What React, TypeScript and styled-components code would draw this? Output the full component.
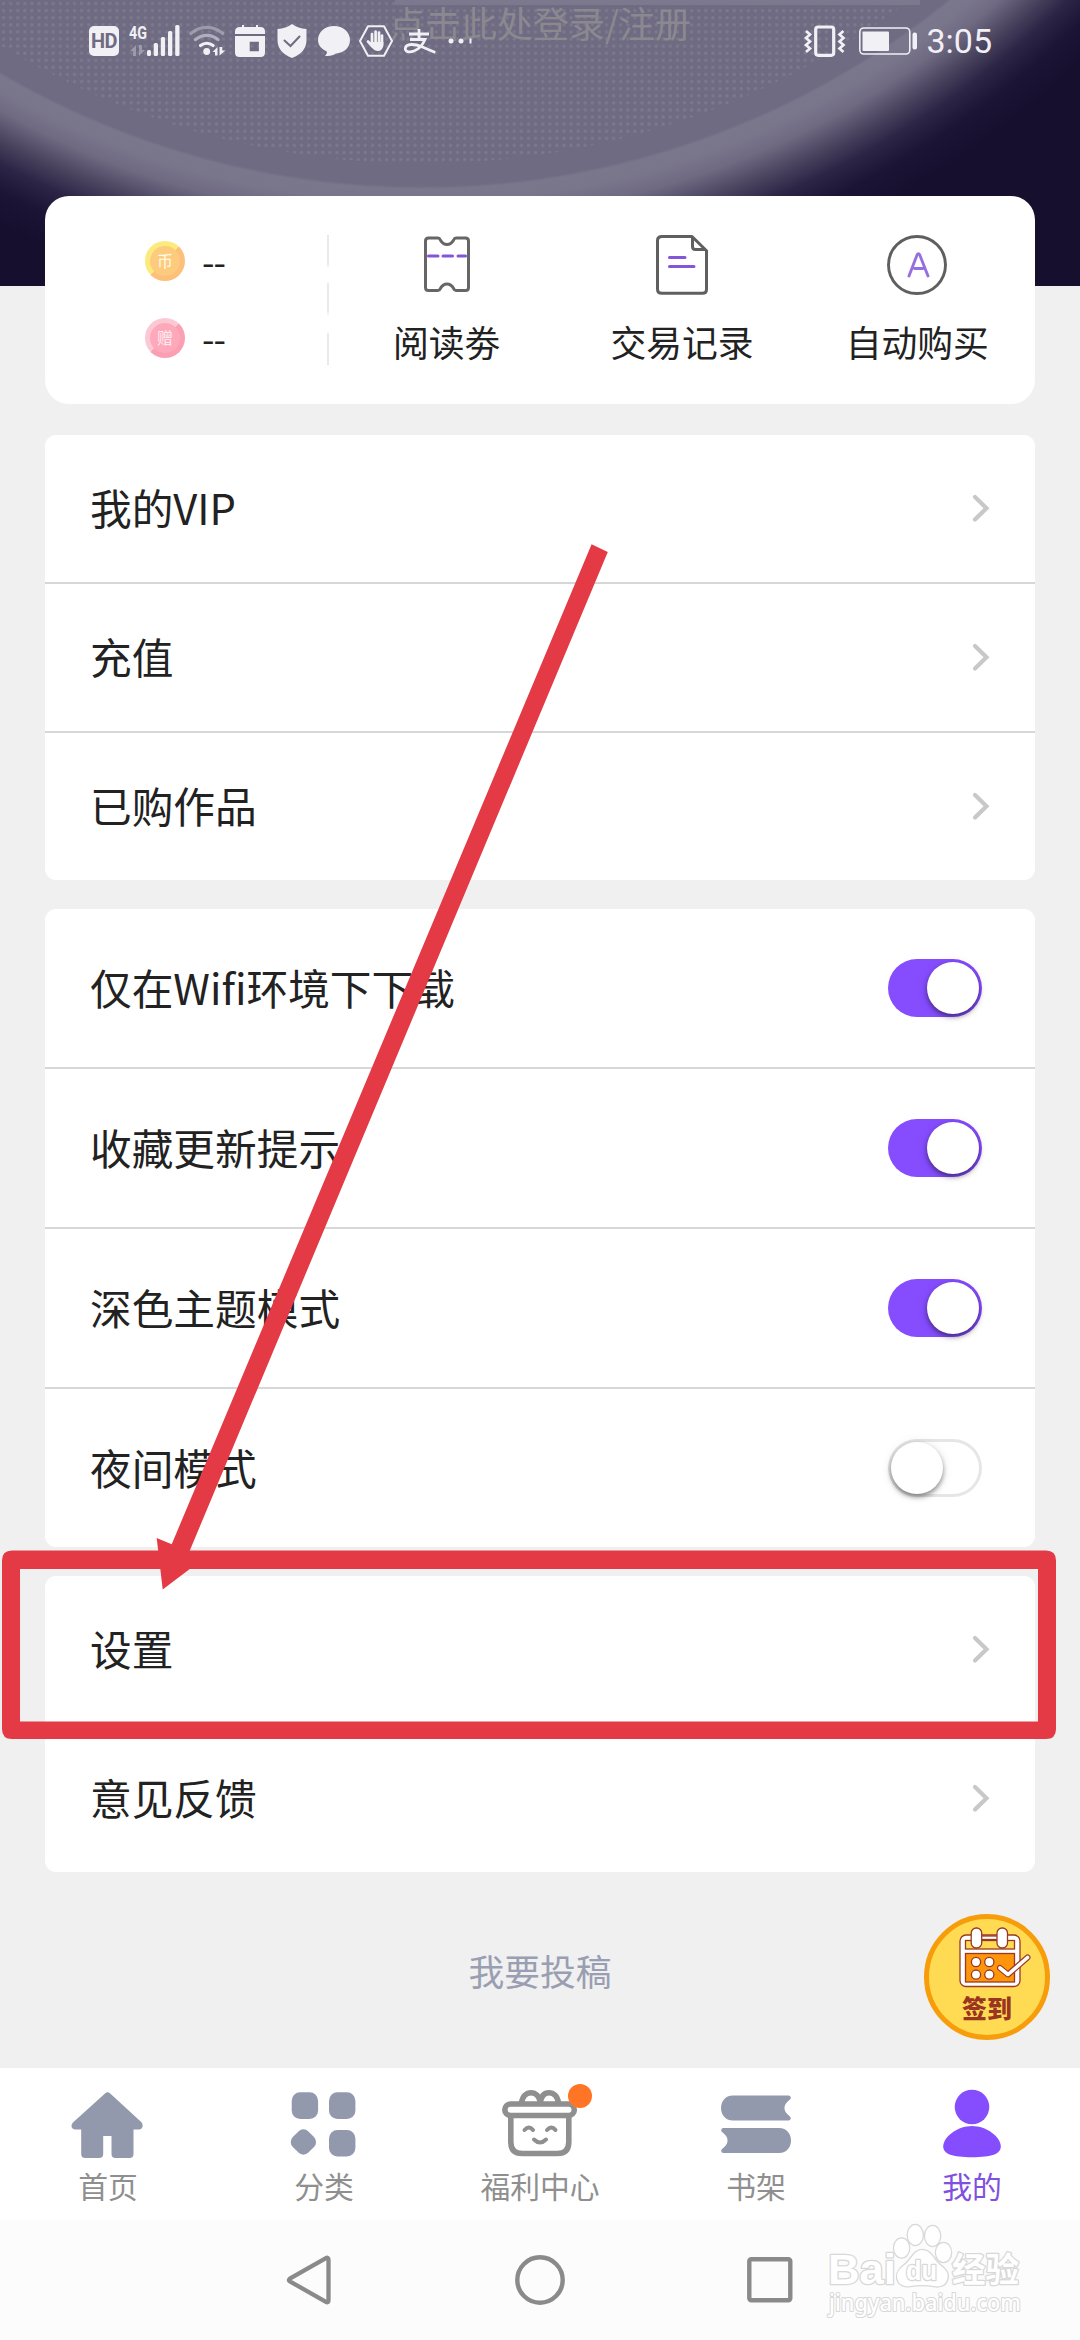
import React from "react";
import styled, { createGlobalStyle, css } from "styled-components";

const purple = "#864dff";
const slate = "#9299ad";
const annotationRed = "#e33a45";

const GlobalStyle = createGlobalStyle`
  * { box-sizing: border-box; }
  body {
    margin: 0;
    background: #f0f0f0;
    font-family: "Noto Sans CJK SC", "Noto Sans", sans-serif;
    color: #222;
  }
  svg { display: block; flex: none; overflow: visible; }
`;

const Screen = styled.div`
  position: relative;
  width: 1080px;
  height: 2340px;
  overflow: hidden;
  display: flex;
  flex-direction: column;
`;

/* ---------- header ---------- */

const Hero = styled.header`
  position: relative;
  flex: none;
  height: 286px;
  background: radial-gradient(
    circle at 422px -648px,
    #6f6b82 834px,
    #7a768c 837px,
    #79758b 850px,
    #6f6a82 868px,
    #4e4863 890px,
    #2d2545 915px,
    #1c1435 940px,
    #170f2e 970px
  );
  &::before {
    content: "";
    position: absolute;
    inset: 0;
    background: radial-gradient(circle, #7d798f 1px, transparent 2.3px) 0 0 / 7.1px 7.1px;
    mask-image: radial-gradient(circle at 422px -648px, #000 811px, transparent 812px);
  }
  &::after {
    content: "";
    position: absolute;
    top: 0;
    left: 395px;
    width: 525px;
    height: 5px;
    background: #7c788e;
  }
`;

const LoginHint = styled.div`
  position: absolute;
  z-index: 1;
  top: 1px;
  left: 0;
  right: 0;
  text-align: center;
  font-size: 36px;
  line-height: 42px;
  color: #8b898f;
`;

const StatusBar = styled.div`
  position: relative;
  z-index: 2;
  display: flex;
  justify-content: space-between;
  align-items: center;
  height: 82px;
  padding: 0 88px 0 89px;
  color: #f1f0f5;
`;

const StatusGroup = styled.div<{ $gap: number }>`
  display: flex;
  align-items: center;
  gap: ${(p) => p.$gap}px;
`;

const HdBadge = styled.span`
  width: 30px;
  height: 30px;
  border-radius: 5px;
  background: #f1f0f5;
  color: #6f6b82;
  font: 700 20px/31px Roboto, sans-serif;
  letter-spacing: -0.5px;
  text-align: center;
`;

const Clock = styled.span`
  font: 400 34px/40px Roboto, sans-serif;
`;

/* ---------- wallet card ---------- */

const Main = styled.main`
  position: relative;
  flex: 1;
  display: flex;
  flex-direction: column;
  padding: 0 45px;
  margin-top: -90px;
`;

const WalletCard = styled.section`
  display: flex;
  height: 208px;
  margin-bottom: 31px;
  border-radius: 24px;
  background: #fff;
`;

const Balances = styled.div`
  display: flex;
  flex-direction: column;
  gap: 37px;
  width: 282px;
  padding: 45px 0 0 100px;
`;

const Balance = styled.div`
  display: flex;
  align-items: center;
  gap: 17px;
  height: 40px;
`;

const Coin = styled.span<{ $gift?: boolean }>`
  display: flex;
  align-items: center;
  justify-content: center;
  width: 40px;
  height: 40px;
  border-radius: 50%;
  background: ${(p) =>
    p.$gift
      ? "linear-gradient(135deg, #fbc8d4 50%, #fb9fb2 50%)"
      : "linear-gradient(135deg, #fdea7c 50%, #fcc07a 50%)"};
`;

const CoinFace = styled.span<{ $gift?: boolean }>`
  width: 30px;
  height: 30px;
  border-radius: 50%;
  background: ${(p) => (p.$gift ? "#fda9bb" : "#fdcb7d")};
  color: ${(p) => (p.$gift ? "#ffe9ee" : "#fffbe6")};
  font-size: 16px;
  line-height: 29px;
  text-align: center;
`;

const Amount = styled.span`
  font-size: 36px;
  line-height: 40px;
  letter-spacing: -1px;
  padding-bottom: 2px;
`;

const Divider = styled.div`
  width: 2px;
  height: 130px;
  margin-top: 39px;
  background: linear-gradient(
    #e9e9e9 0 22%, #fff 26%, #fff 36%, #e9e9e9 38% 58%, #fff 63%, #fff 74%, #e9e9e9 77%
  );
`;

const WalletLink = styled.div`
  flex: 1;
  display: flex;
  flex-direction: column;
  align-items: center;
  padding-top: 39px;
  font-size: 35.8px;
  line-height: 52px;
`;

const WalletIcon = styled.div`
  height: 60px;
  margin-bottom: 20px;
`;

/* ---------- menu cards ---------- */

const Card = styled.section`
  flex: none;
  margin-bottom: 29px;
  border-radius: 11px;
  background: #fff;
  overflow: hidden;
`;

const Row = styled.div<{ $tall?: boolean; $plain?: boolean }>`
  display: flex;
  align-items: center;
  justify-content: space-between;
  height: ${(p) => (p.$tall ? 160 : 149)}px;
  padding: 0 ${(p) => (p.$tall ? 53 : 46)}px 0 45px;
  border-bottom: 2px solid ${(p) => (p.$plain ? "#fff" : "#d6d7d7")};
  &:last-child {
    height: ${(p) => (p.$tall ? 158 : 147)}px;
    border-bottom: 0;
  }
`;

const RowLabel = styled.span`
  padding-bottom: 3px;
  font-size: 41.7px;
`;

const Track = styled.span<{ $on: boolean }>`
  display: flex;
  align-items: center;
  width: 94px;
  height: 58px;
  padding: 0 3px;
  border-radius: 29px;
  ${(p) =>
    p.$on
      ? css`
          justify-content: flex-end;
          background: ${purple};
        `
      : css`
          justify-content: flex-start;
          background: #fff;
          box-shadow: inset 0 0 0 3px #e6e6e6;
        `}
`;

const Thumb = styled.span`
  width: 52px;
  height: 52px;
  border-radius: 50%;
  background: #fff;
  box-shadow: 0 3px 5px rgba(0, 0, 0, 0.42), 0 1px 12px rgba(0, 0, 0, 0.1);
`;

const SubmitLink = styled.div`
  margin-top: 43px;
  text-align: center;
  font-size: 35.8px;
  line-height: 52px;
  color: #9a9eb2;
`;

const CheckInButton = styled.div`
  position: absolute;
  left: 924px;
  top: 1914px;
  width: 126px;
  height: 126px;
  border: 5px solid #f79d0c;
  border-radius: 50%;
  background: #fedb52;
  display: flex;
  flex-direction: column;
  align-items: center;
  padding-top: 8px;
  color: #9b3420;
  font-size: 25px;
  font-weight: 900;
  line-height: 36px;
  svg { margin-left: 13px; }
`;

/* ---------- bottom bars ---------- */

const TabBar = styled.nav`
  flex: none;
  display: grid;
  grid-template-columns: repeat(5, 1fr);
  height: 152px;
  background: #fff;
`;

const Tab = styled.div<{ $active?: boolean }>`
  display: flex;
  flex-direction: column;
  align-items: center;
  padding-top: 16px;
  font-size: 29.8px;
  line-height: 44px;
  color: ${(p) => (p.$active ? "#8050e0" : "#8f8f8f")};
`;

const TabIcon = styled.div`
  position: relative;
  height: 78.5px;
`;

const Dot = styled.span`
  position: absolute;
  top: 0;
  left: 66px;
  width: 24px;
  height: 24px;
  border-radius: 50%;
  background: #ff7525;
`;

const SystemNav = styled.div`
  flex: none;
  display: flex;
  justify-content: center;
  align-items: center;
  height: 120px;
  background: #fcfcfc;
`;

const NavKey = styled.div`
  display: flex;
  justify-content: center;
  width: 230px;
`;

const Watermark = styled.svg`
  position: absolute;
  left: 820px;
  top: 2215px;
`;

const Annotation = styled.svg`
  position: absolute;
  left: 0;
  top: 0;
  pointer-events: none;
`;

/* ---------- drawings ---------- */

const Signal = () => (
  <svg width="51" height="34" viewBox="129 24 51 34" fill="#f1f0f5">
    <text x="129" y="38.6" fontFamily="Roboto" fontWeight="700" fontSize="18.5" textLength="18" lengthAdjust="spacingAndGlyphs">4G</text>
    <path d="M136 56v-11l-6 6h3v5zM139 45v11l6-6h-3v-5z" opacity=".35" />
    <rect x="147" y="50" width="4" height="6" rx="1.5" />
    <rect x="153.7" y="43" width="4.3" height="13" rx="1.5" />
    <rect x="160.8" y="37" width="4.3" height="19" rx="1.5" />
    <rect x="168" y="31" width="4.3" height="25" rx="1.5" />
    <rect x="175.2" y="25" width="4.3" height="31" rx="1.5" />
  </svg>
);

const Wifi = () => (
  <svg width="35" height="34" viewBox="190 24 35 34" fill="none" stroke="#f1f0f5" strokeWidth="3.2" strokeLinecap="round">
    <path d="M190.8 33.5a24 24 0 0 1 32 0" opacity=".35" />
    <path d="M195.5 39.6a17 17 0 0 1 22.6 0" opacity=".5" />
    <path d="M200.5 45.5a10 10 0 0 1 12.6 0" />
    <circle cx="206.7" cy="51.5" r="3.4" fill="#f1f0f5" stroke="none" />
    <path d="M217.5 55.5v-8.500l-5 5h2.500v3.500zM219.5 47v8.500l6-5h-3.200v-3.500z" fill="#f1f0f5" stroke="none" />
  </svg>
);

const CalendarGlyph = () => (
  <svg width="32" height="34" viewBox="235 24 32 34" fill="#f1f0f5">
    <path d="M240 27h2v-2h2v2h12v-2h2v2h2.500q4.500 0 4.500 4.500V34h-30v-2.500q0-4.500 5-4.500z" />
    <path fillRule="evenodd" d="M235 36h30v16.500q0 4.500-4.500 4.500h-21q-4.500 0-4.500-4.500zM249.700 41.700v9.600h9.200v-9.600z" />
  </svg>
);

const Shield = () => (
  <svg width="31" height="34" viewBox="277 24 31 34">
    <path d="M292 24q6 4.500 14.500 5v11q0 12.500-14.500 18-14.500-5.500-14.500-18V29q8.500-.500 14.500-5z" fill="#f1f0f5" />
    <path d="M284.500 40.500l6 5.500 9-9.500" fill="none" stroke="#6f6b82" strokeWidth="2" strokeLinecap="round" />
  </svg>
);

const Bubble = () => (
  <svg width="31" height="34" viewBox="318 24 31 34" fill="#f1f0f5">
    <path d="M334 26c9 0 16 6 16 14 0 7.600-6 13-14 13.500-2.500 1.500-6 3-11 2.300 1.500-1.500 2.200-2.800 1.800-4.300-5-2.200-8.800-6-8.800-11.500 0-8 7-14 16-14z" />
  </svg>
);

const HandHex = () => (
  <svg width="35" height="34" viewBox="359 24 35 34">
    <path d="M368 26.200h16l8 14.800-8 14.800h-16L360 41z" fill="none" stroke="#f1f0f5" strokeWidth="2" strokeLinejoin="round" />
    <path
      d="M372 34v9M375.600 31.500V43M379 32.500V43M382 35.500v9M372 46l-4-4.500"
      stroke="#f1f0f5" strokeWidth="2.700" strokeLinecap="round"
    />
    <path d="M370.600 42h12.800v4q-1.400 5-5.400 5t-6.500-4z" fill="#f1f0f5" />
  </svg>
);

const Alipay = () => (
  <svg width="34" height="34" viewBox="404 24 34 34" fill="none" stroke="#f1f0f5" strokeWidth="2.800">
    <path d="M409 34h20M419 29v10M410 39.500h15q-4 9-11 11.500c-5 2-9 .5-8.700-2.500.5-5.500 10-4.500 16-2l14 6" />
  </svg>
);

const More = () => (
  <svg width="24" height="34" viewBox="448 24 24 34" fill="#f1f0f5">
    <circle cx="451" cy="41" r="2.500" />
    <circle cx="461" cy="41" r="2.500" />
    <rect x="469.500" y="38.500" width="2" height="5" />
  </svg>
);

const Vibrate = () => (
  <svg width="46" height="34" viewBox="805 23 46 34" fill="none" stroke="#f1f0f5">
    <rect x="815.700" y="26" width="18" height="28.300" rx="2.500" strokeWidth="3.200" />
    <path d="M806 30l4 3.500-4 3.500 4 3.500-4 3.500 4 3.500-4 3.500M843.500 30l-4 3.500 4 3.500-4 3.500 4 3.500-4 3.500 4 3.500" strokeWidth="2.700" />
  </svg>
);

const Battery = () => (
  <svg width="59" height="34" viewBox="859 23.500 59 34" fill="#f1f0f5">
    <rect x="859.800" y="27.500" width="50" height="26" rx="4" fill="none" stroke="#f1f0f5" strokeWidth="1.600" />
    <rect x="862.500" y="31" width="26.500" height="19.500" rx="1" />
    <rect x="912.500" y="32" width="4.500" height="17" rx="2" />
  </svg>
);

const TicketIcon = () => (
  <svg width="46" height="60" viewBox="0 0 46 60" fill="none" strokeWidth="3">
    <path
      d="M4.500 3h9.500q1.500 0 2.500 2.200 2.500 4.300 6.500 4.300t6.500-4.300Q30.500 3 32 3h9.500q3 0 3 3v46.500q0 3-3 3h-9.500q-1.500 0-2.500-2.200-2.500-4.300-6.500-4.300t-6.500 4.300q-1 2.200-2.500 2.200h-9.500q-3 0-3-3V6q0-3 3-3z"
      stroke="#666" strokeLinejoin="round"
    />
    <path d="M4.500 21h9.500M19 21h9.500M34 21h7.500" stroke="#8355d8" strokeLinecap="round" />
  </svg>
);

const RecordIcon = () => (
  <svg width="52" height="60" viewBox="0 0 52 60" fill="none" strokeWidth="3">
    <path d="M6 1.500h30l14.500 14.200v38.600q0 4-4 4H6q-4.500 0-4.500-4V5.500q0-4 4.500-4z" stroke="#5f5f5f" strokeLinejoin="round" />
    <path d="M36.500 2v9.500q0 3 3 3h10" stroke="#5f5f5f" />
    <path d="M13.500 22.500h15.500M13.500 31.500h24.500" stroke="#8355d8" strokeLinecap="round" />
  </svg>
);

const AutoBuyIcon = () => (
  <svg width="60" height="60" viewBox="0 0 60 60" fill="none" strokeWidth="2.900">
    <circle cx="30" cy="30" r="28.500" stroke="#5f5f5f" />
    <path d="M22 41l8-21q1.400-2.500 2.800 0l8.200 21M27.500 33.500h8.500" stroke="#9670e0" strokeLinecap="round" />
  </svg>
);

const Chevron = () => (
  <svg width="17" height="30" viewBox="0 0 17 30">
    <path d="M3 3l11.500 11.200L3 25.500" fill="none" stroke="#c8c8c8" strokeWidth="4.200" strokeLinecap="round" />
  </svg>
);

const HomeIcon = () => (
  <svg width="72" height="80" viewBox="72 2084 72 80" fill={slate}>
    <path d="M105 2093.500q2.600-2.600 5.200 0l31 28.500c3 3.500 1 7.500-2 7.500h-5.700v24.500q0 4-4 4h-14q-4 0-4-4v-18h-8.300v18q0 4-4 4h-14q-4 0-4-4v-24.500h-5.700c-4 0-5.500-4.500-2-7.500z" />
  </svg>
);

const CategoryIcon = () => (
  <svg width="68" height="80" viewBox="290 2084 68 80" fill={slate}>
    <rect x="291.700" y="2092.300" width="26.400" height="26.600" rx="8.500" />
    <rect x="329" y="2092.300" width="26.400" height="26.600" rx="8.500" />
    <rect x="329" y="2130" width="26.400" height="26.600" rx="8.500" />
    <rect x="292.400" y="2131" width="22" height="22" rx="7" transform="rotate(45 303.400 2142)" />
  </svg>
);

const GiftIcon = () => (
  <svg width="76" height="80" viewBox="502 2084 76 80" fill="none" stroke="#8f8f8f" strokeWidth="5.600">
    <path d="M521.500 2103c1-7 5-10.300 9.500-10.300s8.500 3.300 9.300 10.300c.8-7 4.200-10.300 8.700-10.300s8.500 3.300 9.500 10.300" />
    <rect x="504.800" y="2104" width="69.500" height="11.500" rx="5.700" />
    <path d="M510.800 2116v26q0 11.500 11.500 11.500h35q11.500 0 11.500-11.500v-26" />
    <path d="M524.500 2130q4.500-5 8.500 0M547 2130q4.500-5 8.500 0M534 2139.500q6 6 12 0" strokeWidth="4" strokeLinecap="round" />
  </svg>
);

const ShelfIcon = () => (
  <svg width="70" height="80" viewBox="721 2084 70 80" fill={slate}>
    <path d="M733 2095.500h55.500c2.500 0 3 3 1.200 4.300-7 5-7 11.500 0 16.500 1.800 1.300 1.300 4.200-1.200 4.200H733c-16 0-16-25 0-25z" />
    <path d="M779 2128h-55.500c-2.500 0-3 3-1.200 4.300 7 5 7 11.500 0 16.500-1.800 1.300-1.300 4.200 1.200 4.200H779c16 0 16-25 0-25z" />
  </svg>
);

const PersonIcon = () => (
  <svg width="60" height="80" viewBox="942 2084 60 80" fill={purple}>
    <circle cx="972" cy="2107" r="17.300" />
    <path d="M972 2126c14.500 0 28.800 11 28.800 20.500 0 7.500-9 10.700-28.800 10.700s-28.800-3.200-28.800-10.700c0-9.500 14.300-20.500 28.800-20.500z" />
  </svg>
);

const CheckInIcon = () => (
  <svg width="74" height="62" viewBox="32 13 74 62" stroke="#9b3a24" strokeWidth="1.300">
    <rect x="35" y="21" width="60" height="51.500" rx="6" fill="#fff" />
    <rect x="40.500" y="26.500" width="49" height="8.500" fill="#fedb52" />
    <rect x="40.500" y="39.500" width="49" height="28.500" fill="#ff950a" />
    <rect x="56" y="22" width="18" height="3.500" fill="#fff" />
    <rect x="46.200" y="14" width="10.500" height="20" rx="5" fill="#fff" />
    <rect x="72" y="14" width="10.500" height="20" rx="5" fill="#fff" />
    {[51, 64.3].map((x) => [48, 60.6].map((y) => <circle key={`${x}-${y}`} cx={x} cy={y} r="4.600" fill="#fff" />))}
    <path d="M75 54l8 6.500 19.500-17" fill="none" strokeWidth="6" strokeLinecap="round" strokeLinejoin="round" />
    <path d="M75 54l8 6.500 19.500-17" fill="none" stroke="#fff" strokeWidth="3.600" strokeLinecap="round" strokeLinejoin="round" />
  </svg>
);

const BackKey = () => (
  <svg width="46" height="52" viewBox="0 0 46 52">
    <path d="M38.500 4.300q3-1.700 3 1.500v40.400q0 3.200-3 1.500L2.800 27.300q-1.800-1.300 0-2.600z" fill="none" stroke="#8a8a8a" strokeWidth="4.300" strokeLinejoin="round" />
  </svg>
);

const HomeKey = () => (
  <svg width="50" height="50" viewBox="0 0 50 50">
    <circle cx="25" cy="25" r="22.700" fill="none" stroke="#8a8a8a" strokeWidth="4.400" />
  </svg>
);

const RecentKey = () => (
  <svg width="46" height="46" viewBox="0 0 46 46">
    <rect x="2.300" y="2.300" width="41" height="41" rx="2" fill="none" stroke="#8a8a8a" strokeWidth="4.400" />
  </svg>
);

const BaiduMark = () => (
  <Watermark
    width="220" height="110" viewBox="820 2215 220 110"
    fill="#fff" stroke="#d8d8d8" strokeWidth="2.600" strokeLinejoin="round" paintOrder="stroke"
    fontFamily='"Noto Sans CJK SC", sans-serif' fontWeight="700"
  >
    <ellipse cx="901.600" cy="2248" rx="7.500" ry="9.500" />
    <ellipse cx="915.300" cy="2235" rx="7.500" ry="10" />
    <ellipse cx="932.600" cy="2236" rx="7.500" ry="10" />
    <ellipse cx="943.500" cy="2252.500" rx="7.500" ry="9.500" />
    <text x="828" y="2284" fontFamily='"Liberation Sans"' fontSize="43" textLength="68" lengthAdjust="spacingAndGlyphs">Bai</text>
    <path d="M922 2250c9 0 11 9 18 15 7 5.500 9 9 7 15-2 6-8 7-13 6-8-1.500-16-1.500-24 0-5 1-11-1-12.500-6.500-1.500-6 1-10 7-14.500 7-5 9-15 17.500-15z" />
    <text x="906" y="2280" fontFamily='"Liberation Sans"' fontSize="27" textLength="31" lengthAdjust="spacingAndGlyphs">du</text>
    <text x="952" y="2282" fontSize="34" textLength="67" lengthAdjust="spacingAndGlyphs">经验</text>
    <text x="829" y="2311" fontFamily='"Noto Sans"' fontWeight="500" fontSize="24" strokeWidth="2.200" textLength="192" lengthAdjust="spacingAndGlyphs">jingyan.baidu.com</text>
  </Watermark>
);

/* ---------- page ---------- */

const walletLinks = [
  { label: "阅读劵", icon: <TicketIcon /> },
  { label: "交易记录", icon: <RecordIcon /> },
  { label: "自动购买", icon: <AutoBuyIcon /> },
];

const switches = [
  { label: "仅在Wifi环境下下载", on: true },
  { label: "收藏更新提示", on: true },
  { label: "深色主题模式", on: true },
  { label: "夜间模式", on: false },
];

const tabs = [
  { label: "首页", icon: <HomeIcon /> },
  { label: "分类", icon: <CategoryIcon /> },
  { label: "福利中心", icon: <GiftIcon />, dot: true },
  { label: "书架", icon: <ShelfIcon /> },
  { label: "我的", icon: <PersonIcon />, active: true },
];

function LinkRow({ label, plain }: { label: string; plain?: boolean }) {
  return (
    <Row $plain={plain}>
      <RowLabel>{label}</RowLabel>
      <Chevron />
    </Row>
  );
}

export default function App() {
  return (
    <>
      <GlobalStyle />
      <Screen>
        <Hero>
          <LoginHint>点击此处登录/注册</LoginHint>
          <StatusBar>
            <StatusGroup $gap={10}>
              <HdBadge>HD</HdBadge>
              <Signal />
              <Wifi />
              <CalendarGlyph />
              <Shield />
              <Bubble />
              <HandHex />
              <Alipay />
              <More />
            </StatusGroup>
            <StatusGroup $gap={8}>
              <Vibrate />
              <Battery />
              <Clock>3:05</Clock>
            </StatusGroup>
          </StatusBar>
        </Hero>

        <Main>
          <WalletCard>
            <Balances>
              <Balance>
                <Coin><CoinFace>币</CoinFace></Coin>
                <Amount>--</Amount>
              </Balance>
              <Balance>
                <Coin $gift><CoinFace $gift>赠</CoinFace></Coin>
                <Amount>--</Amount>
              </Balance>
            </Balances>
            <Divider />
            {walletLinks.map((link) => (
              <WalletLink key={link.label}>
                <WalletIcon>{link.icon}</WalletIcon>
                {link.label}
              </WalletLink>
            ))}
          </WalletCard>

          <Card>
            <LinkRow label="我的VIP" />
            <LinkRow label="充值" />
            <LinkRow label="已购作品" />
          </Card>

          <Card>
            {switches.map((item) => (
              <Row key={item.label} $tall>
                <RowLabel>{item.label}</RowLabel>
                <Track $on={item.on}>
                  <Thumb />
                </Track>
              </Row>
            ))}
          </Card>

          <Card>
            <LinkRow label="设置" plain />
            <LinkRow label="意见反馈" />
          </Card>

          <SubmitLink>我要投稿</SubmitLink>
        </Main>

        <TabBar>
          {tabs.map((tab) => (
            <Tab key={tab.label} $active={tab.active}>
              <TabIcon>
                {tab.icon}
                {tab.dot && <Dot />}
              </TabIcon>
              {tab.label}
            </Tab>
          ))}
        </TabBar>

        <SystemNav>
          <NavKey><BackKey /></NavKey>
          <NavKey><HomeKey /></NavKey>
          <NavKey><RecentKey /></NavKey>
        </SystemNav>

        <CheckInButton>
          <CheckInIcon />
          签到
        </CheckInButton>

        <BaiduMark />

        <Annotation width="1080" height="2340" viewBox="0 0 1080 2340" fill={annotationRed}>
          <path fillRule="evenodd" d="M12 1550.500H1046q10 0 10 10V1729q0 10-10 10H12q-10 0-10-10V1560.500q0-10 10-10zM20 1569V1721.500H1038V1569z" />
          <path d="M591.600 544.300L607.800 552 189.300 1551.700 204.300 1558 162.700 1589.500 156.700 1538 171.700 1544.300z" />
        </Annotation>
      </Screen>
    </>
  );
}
